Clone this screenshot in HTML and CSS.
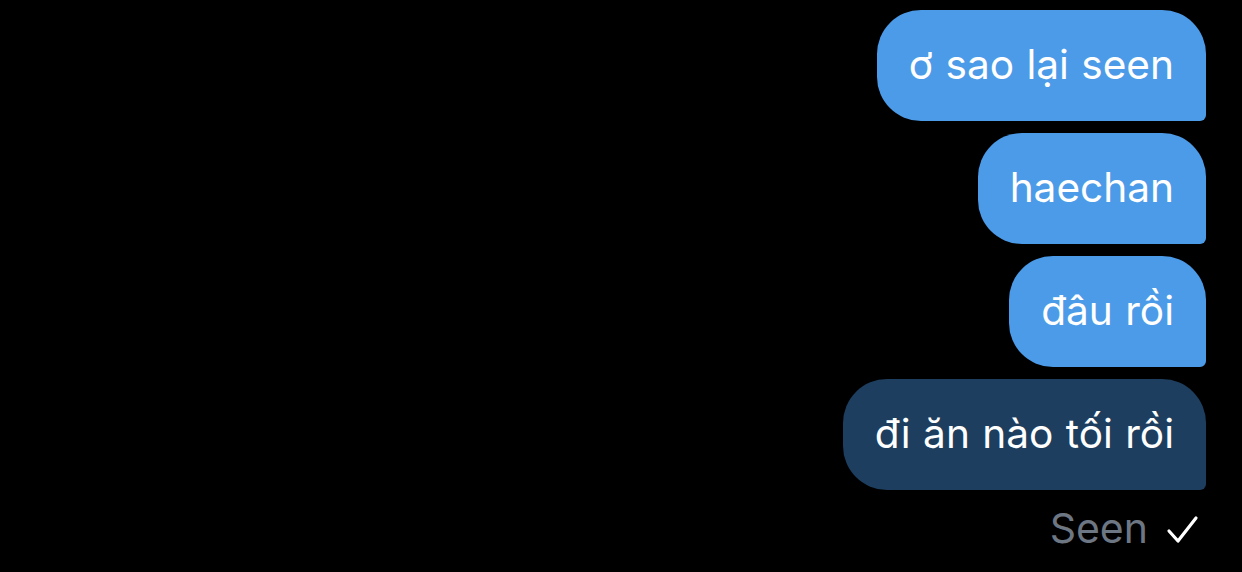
FILE: index.html
```html
<!DOCTYPE html>
<html lang="vi">
<head>
    <meta charset="UTF-8">
    <meta name="viewport" content="width=device-width, initial-scale=1.0">
    <title>Tin nhắn</title>
    <link rel="stylesheet" href="styles.css">
</head>
<body>
    <div class="chat">
        <div class="bubble">ơ sao lại seen</div>
        <div class="bubble">haechan</div>
        <div class="bubble">đâu rồi</div>
        <div class="bubble last">đi ăn nào tối rồi</div>
        <div class="status">
            <span>Seen</span>
            <svg class="check" width="34" height="30" viewBox="0 0 34 30">
                <path d="M3 16 L12 26 L30 3" fill="none" stroke="#fff" stroke-width="3.2" stroke-linecap="round" stroke-linejoin="round"/>
            </svg>
        </div>
    </div>
</body>
</html>
```

FILE: styles.css
```css
body {
    margin: 0;
    background-color: #000;
    font-family: Inter, "Noto Sans", sans-serif;
    height: 100vh;
}

.chat {
    display: flex;
    flex-direction: column;
    align-items: flex-end; /* mensagens enviadas ficam à direita */
    gap: 12px;
    padding: 10px 36px 0 0;
}

.bubble {
    background-color: #4c9be8;
    color: #fff;
    font-size: 40.6px;
    line-height: 48px;
    word-spacing: 1px;
    padding: 31px 32px 32px 32px;
    border-radius: 44px 44px 6px 44px;
}

.bubble.last {
    background-color: #1d3e5e;
}

.status {
    display: flex;
    align-items: center;
    gap: 18px;
    margin-top: 2px;
    padding-right: 6px;
    color: #6d7683;
    font-size: 41px;
    line-height: 48px;
}

.check {
    margin-top: 4px;
}
```
